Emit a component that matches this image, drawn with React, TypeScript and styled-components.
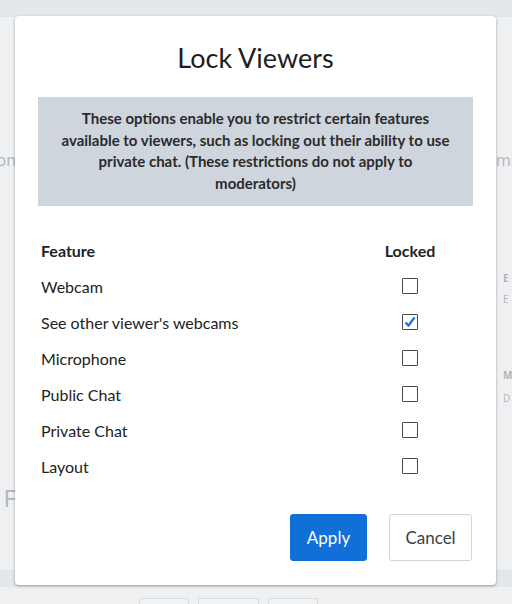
import styled, { createGlobalStyle } from "styled-components";

const GlobalStyle = createGlobalStyle`
  html, body {
    margin: 0;
    padding: 0;
  }
  body {
    font-family: Lato, "Noto Sans", sans-serif;
    background: #eef0f2;
    overflow: hidden;
  }
`;

const Page = styled.div`
  position: relative;
  width: 512px;
  height: 604px;
  overflow: hidden;
  background: #eef0f2;
`;

const TopStrip = styled.div`
  height: 16px;
  background: #e4e8eb;
  border-bottom: 1px dotted #dde1e4;
`;

const Body = styled.div`
  display: flex;
  justify-content: space-between;
  height: 553px;
`;

const SideColumn = styled.div<{ $align: "left" | "right" }>`
  display: flex;
  flex-direction: column;
  width: 16px;
  overflow: hidden;
  color: #b3b6b9;
  font-family: "Open Sans", sans-serif;
  align-items: ${(p) => (p.$align === "left" ? "flex-end" : "flex-start")};
`;

const FadedText = styled.div<{ $top: number; $size?: number; $bold?: boolean; $indent?: number }>`
  margin-top: ${(p) => p.$top}px;
  margin-left: ${(p) => p.$indent ?? 0}px;
  font-size: ${(p) => p.$size ?? 14}px;
  font-weight: ${(p) => (p.$bold ? 700 : 400)};
  line-height: 1;
  white-space: nowrap;
`;

const BottomBand = styled.div`
  height: 16px;
  background: #e3e7ea;
  border-top: 1px dotted #d8dcdf;
`;

const BottomTabs = styled.div`
  display: flex;
  gap: 9px;
  padding: 11px 0 0 139px;
`;

const GhostTab = styled.div<{ $w: number }>`
  width: ${(p) => p.$w}px;
  height: 14px;
  border: 1px solid #d9dde0;
  border-bottom: none;
  border-radius: 3px 3px 0 0;
  background: #f1f3f4;
`;

const Modal = styled.div`
  position: absolute;
  top: 16px;
  left: 15px;
  width: 481px;
  height: 569px;
  box-sizing: border-box;
  background: #ffffff;
  border-radius: 4px;
  box-shadow: 0 1px 3px rgba(0, 0, 0, 0.35);
  padding: 25px 23px 23px;
  display: flex;
  flex-direction: column;
`;

const Title = styled.h1`
  margin: 0;
  text-align: center;
  font-size: 27px;
  line-height: 34px;
  font-weight: 400;
  color: #1e1e1e;
`;

const InfoBox = styled.div`
  margin-top: 22px;
  background: #cfd5dd;
  padding: 11px 20px 12px;
  text-align: center;
  font-size: 15px;
  line-height: 21.5px;
  font-weight: 700;
  color: #2b2b2b;
`;

const Table = styled.div`
  margin-top: 26px;
  margin-left: 3px;
  margin-right: 28px;
  display: grid;
  grid-template-columns: 1fr 70px;
  grid-auto-rows: 36px;
`;

const Cell = styled.div<{ $center?: boolean; $head?: boolean }>`
  display: flex;
  align-items: center;
  justify-content: ${(p) => (p.$center ? "center" : "flex-start")};
  font-size: 16px;
  font-weight: ${(p) => (p.$head ? 700 : 400)};
  color: #222;
`;

const Box = styled.span`
  width: 16px;
  height: 16px;
  box-sizing: border-box;
  border: 1.5px solid #4a4a4a;
  border-radius: 1px;
  display: flex;
  align-items: center;
  justify-content: center;
  background: #fff;
`;

const Actions = styled.div`
  margin-top: 30px;
  display: flex;
  justify-content: flex-end;
  gap: 22px;
  padding-right: 1px;
`;

const Button = styled.button<{ $primary?: boolean }>`
  height: 47px;
  padding: 0;
  width: ${(p) => (p.$primary ? 77 : 83)}px;
  border-radius: 3px;
  font-family: Lato, "Noto Sans", sans-serif;
  font-size: 17px;
  cursor: pointer;
  background: ${(p) => (p.$primary ? "#1170d8" : "#ffffff")};
  color: ${(p) => (p.$primary ? "#ffffff" : "#3a3f45")};
  border: 1px solid ${(p) => (p.$primary ? "#1170d8" : "#d2d6da")};
`;

const features = [
  { name: "Webcam", locked: false },
  { name: "See other viewer's webcams", locked: true },
  { name: "Microphone", locked: false },
  { name: "Public Chat", locked: false },
  { name: "Private Chat", locked: false },
  { name: "Layout", locked: false },
];

const Check = () => (
  <svg width="12" height="12" viewBox="0 0 12 12">
    <path d="M1.5 6.5 L4.5 9.5 L10.5 1.5" fill="none" stroke="#1a6fd6" strokeWidth="2.2" />
  </svg>
);

const App = () => {
  return (
    <Page>
      <GlobalStyle />
      <TopStrip />
      <Body>
        <SideColumn $align="left">
          <FadedText $top={135} $size={16}>on</FadedText>
          <FadedText $top={318} $size={24}>F</FadedText>
        </SideColumn>
        <SideColumn $align="right">
          <FadedText $top={135} $size={16}>mir</FadedText>
          <FadedText $top={105} $size={10} $bold $indent={7}>E</FadedText>
          <FadedText $top={11} $size={10} $indent={7}>E</FadedText>
          <FadedText $top={66} $size={10} $bold $indent={7}>M</FadedText>
          <FadedText $top={13} $size={10} $indent={7}>D</FadedText>
        </SideColumn>
      </Body>
      <BottomBand />
      <BottomTabs>
        <GhostTab $w={48} />
        <GhostTab $w={59} />
        <GhostTab $w={48} />
      </BottomTabs>

      <Modal>
        <Title>Lock Viewers</Title>
        <InfoBox>
          These options enable you to restrict certain features available to
          viewers, such as locking out their ability to use private chat.
          (These restrictions do not apply to moderators)
        </InfoBox>
        <Table>
          <Cell $head>Feature</Cell>
          <Cell $head $center>Locked</Cell>
          {features.map((f) => (
            <>
              <Cell key={f.name}>{f.name}</Cell>
              <Cell key={f.name + "-box"} $center>
                <Box>{f.locked && <Check />}</Box>
              </Cell>
            </>
          ))}
        </Table>
        <Actions>
          <Button $primary>Apply</Button>
          <Button>Cancel</Button>
        </Actions>
      </Modal>
    </Page>
  );
};

export default App;
